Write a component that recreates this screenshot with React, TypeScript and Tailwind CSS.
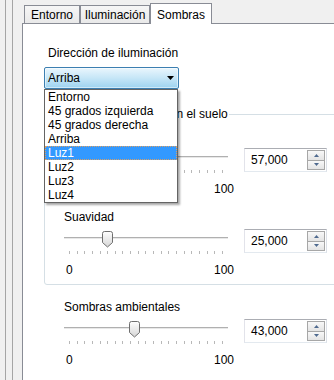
import React from "react";

const TICKS = Array.from({ length: 21 }, (_, i) => i);

const OPTIONS = [
  "Entorno",
  "45 grados izquierda",
  "45 grados derecha",
  "Arriba",
  "Luz1",
  "Luz2",
  "Luz3",
  "Luz4",
];

function SpinBox({ value }: { value: string }) {
  return (
    <div className="mt-[5px] ml-[16px] flex h-[24px] w-[83px] border border-[#abadb3] border-b-[#e3e9ef] border-l-[#e2e3ea] border-r-[#dbdfe6] bg-white">
      <div className="flex-1 pl-[6px] leading-[22px] text-black">{value}</div>
      <div className="my-[1px] mr-[1px] flex w-[18px] flex-col border border-[#a7a7a7]">
        <div className="flex flex-1 items-center justify-center border-b border-[#a7a7a7] bg-linear-to-b from-[#f8f8f8] to-[#e4e4e4]">
          <svg width="5" height="3" viewBox="0 0 5 3">
            <path d="M2.5 0 L5 3 H0 Z" fill="#4f6a8f" />
          </svg>
        </div>
        <div className="flex flex-1 items-center justify-center bg-linear-to-b from-[#f8f8f8] to-[#e4e4e4]">
          <svg width="5" height="3" viewBox="0 0 5 3">
            <path d="M0 0 H5 L2.5 3 Z" fill="#4f6a8f" />
          </svg>
        </div>
      </div>
    </div>
  );
}

function SliderRow({ label, value }: { label: string; value: number }) {
  const left = 5 + value * 1.53 - 5.5;
  return (
    <div>
      <div className="h-[14px] leading-[14px]">{label}</div>
      <div className="flex items-start">
        <div className="relative w-[164px]">
          <div className="pt-[13px]">
            <div className="h-[1px] bg-[#b0b0b0]" />
            <div className="h-[1px] bg-[#e8e8e8]" />
          </div>
          <div className="ml-[5px] mt-[12px] flex h-[3px] w-[154px] justify-between">
            {TICKS.map((t) => (
              <div key={t} className="h-full w-[1px] bg-[#b8b8b8]" />
            ))}
          </div>
          <div className="mt-[9px] flex w-[170px] justify-between pl-[2px] leading-[14px]">
            <span>0</span>
            <span>100</span>
          </div>
          <svg
            className="absolute top-[7px]"
            style={{ left }}
            width="11"
            height="17"
            viewBox="0 0 11 17"
          >
            <defs>
              <linearGradient id="thumb" x1="0" y1="0" x2="0" y2="1">
                <stop offset="0" stopColor="#ffffff" />
                <stop offset="1" stopColor="#d6d6d6" />
              </linearGradient>
            </defs>
            <path
              d="M0.5 2.5 Q0.5 0.5 2.5 0.5 H8.5 Q10.5 0.5 10.5 2.5 V11.5 L5.5 16 L0.5 11.5 Z"
              fill="url(#thumb)"
              stroke="#6f6f6f"
            />
          </svg>
        </div>
        <SpinBox value={`${value},000`} />
      </div>
    </div>
  );
}

export default function App() {
  return (
    <div className="relative flex h-[380px] w-[334px] overflow-hidden bg-[#f0f0f0] font-['Liberation_Sans',Arial,sans-serif] text-[12px] text-black">
      <div className="flex w-[22px] shrink-0">
        <div className="w-[5px]" />
        <div className="w-[8px] border-x border-[#a5a5a5]" />
      </div>

      <div className="flex min-w-0 flex-1 flex-col">
        <div className="flex h-[24px] items-end border-b border-[#898c95] pl-[2px]">
          <div className="h-[18px] w-[56px] border border-b-0 border-[#898c95] bg-linear-to-b from-[#f6f6f6] to-[#e9e9e9] pt-[2px] text-center leading-[14px]">
            Entorno
          </div>
          <div className="h-[18px] w-[70px] border border-b-0 border-[#898c95] bg-linear-to-b from-[#f6f6f6] to-[#e9e9e9] pt-[2px] text-center leading-[14px]">
            Iluminación
          </div>
          <div className="relative z-10 -mb-px h-[21px] w-[62px] border border-b-0 border-[#898c95] bg-white pt-[4px] text-center leading-[14px]">
            Sombras
          </div>
        </div>

        <div className="flex-1 border-l border-[#898c95] bg-white pl-[21px]">
          <div className="pt-[22px] pl-[4px] leading-[14px]">Dirección de iluminación</div>

          <div className="relative z-20 mt-[7px] w-[135px]">
            <div className="flex h-[22px] items-center rounded-[2px] border border-[#3c7fb1] bg-linear-to-b from-[#eaf6fd] via-[#c6e6f7] to-[#9dd3f0] pl-[3px] pr-[4px] shadow-[inset_0_0_0_1px_rgba(255,255,255,0.5)]">
              <span className="flex-1 leading-[14px]">Arriba</span>
              <svg width="7" height="4" viewBox="0 0 7 4">
                <path d="M0 0 H7 L3.5 4 Z" fill="#000" />
              </svg>
            </div>
            <div className="absolute left-0 top-full w-[134px] border border-[#646464] bg-white shadow-[2px_2px_2px_rgba(0,0,0,0.35)]">
              {OPTIONS.map((o) =>
                o === "Luz1" ? (
                  <div
                    key={o}
                    className="h-[14px] border border-dotted border-[#d9a066] bg-[#3399ff] pl-[2px] leading-[12px] text-white"
                  >
                    {o}
                  </div>
                ) : (
                  <div key={o} className="h-[14px] pl-[3px] leading-[14px]">
                    {o}
                  </div>
                )
              )}
            </div>
          </div>

          <fieldset className="mt-[18px] w-[300px] rounded-[3px] border border-[#d5dfe5] pb-[7px] pl-[19px]">
            <legend className="ml-0 px-[1px] leading-[14px]">Sombras arrojadas en el suelo</legend>
            <div className="pt-[8px]">
              <SliderRow label="Intensidad" value={57} />
            </div>
            <div className="mt-[14px]">
              <SliderRow label="Suavidad" value={25} />
            </div>
          </fieldset>

          <div className="mt-[15px] pl-[20px]">
            <SliderRow label="Sombras ambientales" value={43} />
          </div>
        </div>
      </div>
    </div>
  );
}
